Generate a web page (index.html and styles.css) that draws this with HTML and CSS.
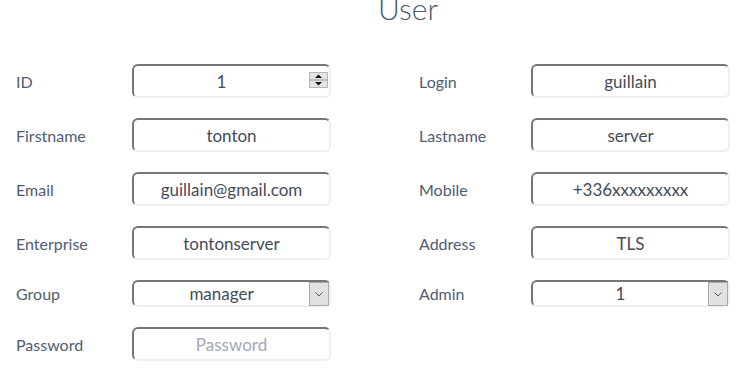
FILE: index.html
```html
<!DOCTYPE html>
<html>
<head>
<meta charset="utf-8">
<link rel="stylesheet" href="styles.css">
</head>
<body>
<h1 class="title">User</h1>
<form class="form">
  <label class="lbl">ID</label>
  <div class="field">
    <input class="inp inp-num" type="text" value="1">
    <span class="spin"><svg width="19" height="16" viewBox="0 0 19 16"><rect x="0.5" y="0.5" width="18" height="15" fill="#e4e4e4" stroke="#b5b5b5"/><line x1="1" y1="8" x2="18" y2="8" stroke="#9a9a9a"/><path d="M6 6 L9.5 2.5 L13 6 Z" fill="#111"/><path d="M6 10 L13 10 L9.5 13.5 Z" fill="#111"/></svg></span>
  </div>
  <span class="gap"></span>
  <label class="lbl">Login</label>
  <div class="field"><input class="inp" type="text" value="guillain"></div>

  <label class="lbl">Firstname</label>
  <div class="field"><input class="inp" type="text" value="tonton"></div>
  <span class="gap"></span>
  <label class="lbl">Lastname</label>
  <div class="field"><input class="inp" type="text" value="server"></div>

  <label class="lbl">Email</label>
  <div class="field"><input class="inp" type="text" value="guillain@gmail.com"></div>
  <span class="gap"></span>
  <label class="lbl">Mobile</label>
  <div class="field"><input class="inp" type="text" value="+336xxxxxxxxx"></div>

  <label class="lbl">Enterprise</label>
  <div class="field"><input class="inp" type="text" value="tontonserver"></div>
  <span class="gap"></span>
  <label class="lbl">Address</label>
  <div class="field"><input class="inp" type="text" value="TLS"></div>

  <label class="lbl">Group</label>
  <div class="field">
    <select class="inp sel"><option>manager</option></select>
    <span class="arrow"><svg width="20" height="24" viewBox="0 0 20 24"><rect x="0.5" y="0.5" width="19" height="23" fill="#e1e1e1" stroke="#a9a9a9"/><path d="M6.5 10.5 L10 14 L13.5 10.5" fill="none" stroke="#555" stroke-width="1"/></svg></span>
  </div>
  <span class="gap"></span>
  <label class="lbl">Admin</label>
  <div class="field">
    <select class="inp sel"><option>1</option></select>
    <span class="arrow"><svg width="20" height="24" viewBox="0 0 20 24"><rect x="0.5" y="0.5" width="19" height="23" fill="#e1e1e1" stroke="#a9a9a9"/><path d="M6.5 10.5 L10 14 L13.5 10.5" fill="none" stroke="#555" stroke-width="1"/></svg></span>
  </div>

  <label class="lbl">Password</label>
  <div class="field"><input class="inp" type="password" placeholder="Password"></div>
</form>
</body>
</html>
```
FILE: styles.css
```css
html, body {
  margin: 0;
  padding: 0;
  background: #fff;
}
body {
  font-family: "Source Sans Pro", Lato, "Liberation Sans", sans-serif;
  color: #4a586b;
  width: 746px;
  height: 375px;
  overflow: hidden;
}
.title {
  margin: -10px 0 0 0;
  padding-left: 70px;
  height: 74px;
  text-align: center;
  font-weight: 300;
  font-size: 30px;
  line-height: 36px;
  color: #4c5a6e;
}
.form {
  display: grid;
  grid-template-columns: 116px 199px 88px 112px 199px;
  row-gap: 20px;
  padding-left: 16px;
  align-items: center;
}
.lbl {
  font-size: 16px;
  color: #4f5d70;
}
.field {
  position: relative;
  display: flex;
}
.inp {
  box-sizing: border-box;
  width: 199px;
  height: 34px;
  margin: 0;
  padding: 0 4px;
  border-style: solid;
  border-width: 2px;
  border-color: #767676 #efefef #efefef #767676;
  border-radius: 6px;
  background: #fff;
  font-family: "Source Sans Pro", Lato, "Liberation Sans", sans-serif;
  font-size: 17px;
  color: #444c58;
  text-align: center;
  outline: none;
}
.inp::placeholder {
  color: #a2a9b3;
}
.inp-num {
  padding-right: 24px;
}
.sel {
  height: 27px;
  -webkit-appearance: none;
  appearance: none;
  text-align-last: center;
  padding-right: 24px;
}
.spin {
  position: absolute;
  right: 3px;
  top: 8px;
  line-height: 0;
}
.arrow {
  position: absolute;
  right: 2px;
  top: 2px;
  line-height: 0;
}
```
